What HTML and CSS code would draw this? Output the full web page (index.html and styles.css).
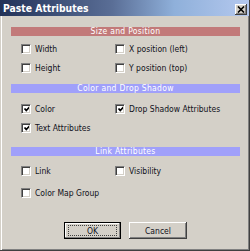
FILE: index.html
```html
<!DOCTYPE html>
<html lang="en">

<head>
  <meta charset="UTF-8">
  <title>Paste Attributes</title>
  <link rel="stylesheet" href="styles.css">
</head>

<body>
  <div class="dialog">
    <div class="titlebar">
      <span class="title">Paste Attributes</span>
      <button type="button" class="close">
        <svg width="8" height="7" viewBox="0 0 8 7">
          <path d="M1 0.5 L7 6.5 M7 0.5 L1 6.5" stroke="#000" stroke-width="1.6" fill="none" />
        </svg>
      </button>
    </div>

    <div class="content">
      <!-- 尺寸与位置 -->
      <div class="group group-size">
        <div class="head red">Size and Position</div>
        <div class="opts">
          <label class="opt"><span class="box"></span>Width</label>
          <label class="opt"><span class="box"></span>X position (left)</label>
          <label class="opt"><span class="box"></span>Height</label>
          <label class="opt"><span class="box"></span>Y position (top)</label>
        </div>
      </div>

      <!-- 颜色与阴影 -->
      <div class="group group-color">
        <div class="head blue">Color and Drop Shadow</div>
        <div class="opts">
          <label class="opt"><span class="box checked"></span>Color</label>
          <label class="opt"><span class="box checked"></span>Drop Shadow Attributes</label>
          <label class="opt"><span class="box checked"></span>Text Attributes</label>
        </div>
      </div>

      <!-- 链接 -->
      <div class="group group-link">
        <div class="head blue">Link Attributes</div>
        <div class="opts">
          <label class="opt"><span class="box"></span>Link</label>
          <label class="opt"><span class="box"></span>Visibility</label>
          <label class="opt"><span class="box"></span>Color Map Group</label>
        </div>
      </div>

      <div class="actions">
        <button type="button" class="btn default"><span class="focus">OK</span></button>
        <button type="button" class="btn">Cancel</button>
      </div>
    </div>
  </div>
</body>

</html>
```

FILE: styles.css
```css
body {
  margin: 0;
  background-color: #d4d0c8;
}

.dialog {
  width: 250px;
  height: 251px;
  box-sizing: border-box;
  display: flex;
  flex-direction: column;
  background-color: #d4d0c8;
  border-right: 1px solid #404040;
  border-bottom: 1px solid #404040;
  font-family: "DejaVu Sans Condensed", "DejaVu Sans", sans-serif;
  font-stretch: condensed;
  font-size: 8.5px;
  color: #101020;
}

.titlebar {
  height: 16px;
  display: flex;
  align-items: center;
  padding-left: 3px;
  padding-right: 2px;
  background: linear-gradient(to right, #223258, #5a6e96 45%, #8fb0da 70%, #b4c8ee);
}

.title {
  flex: 1;
  color: #fff;
  font-weight: bold;
  font-size: 10.3px;
}

.close {
  width: 12px;
  height: 11px;
  padding: 0;
  margin-top: 2px;
  display: flex;
  align-items: center;
  justify-content: center;
  background-color: #d4d0c8;
  border: none;
  box-shadow: inset -1px -1px #404040, inset 1px 1px #fff, inset -2px -2px #808080;
}

.content {
  flex: 1;
  display: flex;
  flex-direction: column;
  padding: 11px 9px 0 11px;
  /* 左边白线，右下暗线 */
  box-shadow: inset 1px 0 #d4d0c8, inset 2px 0 #fff, inset -1px -1px #808080;
}

.head {
  height: 9px;
  line-height: 9px;
  text-align: center;
  color: #fff;
  font-size: 8.5px;
  letter-spacing: 0.3px;
}

.head.red {
  background-color: #c27a7a;
}

.head.blue {
  background-color: #a0a0fa;
}

.opts {
  display: grid;
  grid-template-columns: 94px 1fr;
  grid-auto-rows: 19px;
  padding-left: 10px;
  margin-top: 3px;
}

.group-color {
  margin-top: 7px;
}

.group-color .opts {
  margin-top: 6px;
}

.group-link {
  margin-top: 10px;
}

.group-link .opts {
  margin-top: 5px;
  row-gap: 3px;
}

.opt {
  display: flex;
  align-items: center;
  white-space: nowrap;
}

.box {
  width: 10px;
  height: 10px;
  box-sizing: border-box;
  margin-right: 4px;
  background-color: #fff;
  border-top: 1px solid #808080;
  border-left: 1px solid #808080;
  border-right: 1px solid #fff;
  border-bottom: 1px solid #fff;
  box-shadow: inset 1px 1px #404040, inset -1px -1px #d4d0c8;
}

.box.checked {
  background-image: url("data:image/svg+xml,%3Csvg xmlns='http://www.w3.org/2000/svg' width='8' height='8' viewBox='0 0 8 8'%3E%3Cpath d='M1.5 3.5 L3.3 5.5 L7 1.5' stroke='%23000' stroke-width='1.8' fill='none'/%3E%3C/svg%3E");
  background-repeat: no-repeat;
  background-position: 1px 0px;
}

.actions {
  display: flex;
  justify-content: center;
  gap: 8px;
  margin-top: 20px;
}

.btn {
  width: 58px;
  height: 17px;
  padding: 0;
  font-family: inherit;
  font-stretch: condensed;
  font-size: 8.5px;
  color: #101020;
  background-color: #d4d0c8;
  border: none;
  box-shadow: inset -1px -1px #404040, inset 1px 1px #fff, inset -2px -2px #808080;
}

.btn.default {
  width: 57px;
  border: 1px solid #000;
  display: flex;
  align-items: stretch;
  padding: 2px 3px;
  box-sizing: border-box;
  box-shadow: inset -1px -1px #808080, inset 1px 1px #fff;
}

.focus {
  flex: 1;
  display: flex;
  align-items: center;
  justify-content: center;
  border: 1px dotted #404040;
}
```
